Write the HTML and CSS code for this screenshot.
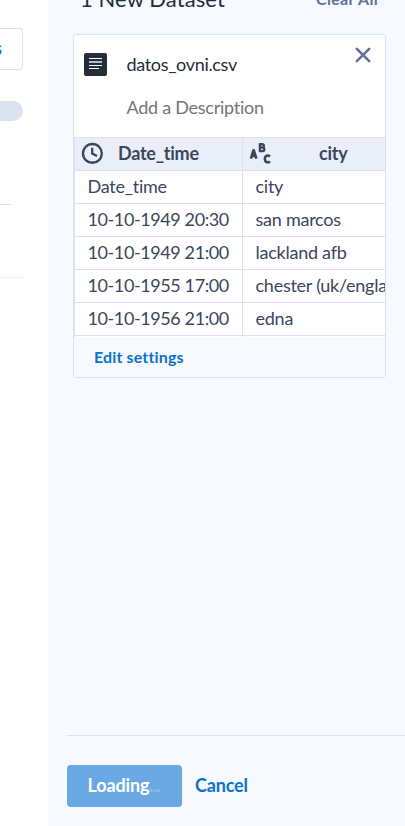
FILE: index.html
```
<!DOCTYPE html>
<html lang="en">
<head>
<meta charset="utf-8">
<title>Datasets</title>
<link rel="stylesheet" href="styles.css">
</head>
<body>
<div class="app">
  <aside class="side">
    <div class="side-button">s</div>
    <div class="side-pill"></div>
    <div class="side-line side-line-short"></div>
    <div class="side-line side-line-light"></div>
  </aside>
  <main class="panel">
    <header class="panel-head">
      <h1 class="title">1 New Dataset</h1>
      <span class="clear">Clear All</span>
    </header>
    <section class="card">
      <div class="card-head">
        <svg class="file-icon" width="23" height="23" viewBox="0 0 23 23"><rect width="23" height="23" rx="2" fill="#242d3a"/><path d="M5 5.5h13M5 12.5h13M5 15.5h10" stroke="#fff" stroke-width="1.1"/><path d="M5 9h13" stroke="#b8bdcb" stroke-width="2"/></svg>
        <div class="names">
          <div class="file-name">datos_ovni.csv</div>
          <div class="description">Add a Description</div>
        </div>
        <svg class="close" width="16" height="16" viewBox="0 0 16 16"><path d="M1.8 1.8l12.4 12.4M14.2 1.8L1.8 14.2" stroke="#627294" stroke-width="2.6" stroke-linecap="round"/></svg>
      </div>
      <div class="grid">
        <div class="cell th">
          <svg class="type-icon" width="22" height="22" viewBox="0 0 22 22" fill="none" stroke="#3a475a"><circle cx="10.4" cy="10.4" r="9.4" stroke-width="2.4"/><path d="M10.2 4.7v5.8l4.8 2.6" stroke-width="2.3"/></svg>
          <span class="th-label">Date_time</span>
        </div>
        <div class="cell th th-city">
          <svg class="type-icon" width="22" height="22" viewBox="0 0 22 22" fill="none" stroke="#3a475a" stroke-width="2.6" stroke-linejoin="round"><path d="M.9 15.6L3.4 7.4H3.8L6.4 15.6M2 13H5.4"/><path d="M9.9 1.2h2.3a1.7 1.7 0 0 1 0 3.4H9.9zM9.9 4.6h2.7a1.75 1.75 0 0 1 0 3.5H9.9z" stroke-width="2.4"/><path d="M20 13.4c-2.3-1.8-5.2-.7-5.2 2.5s2.9 4.3 5.2 2.5"/></svg>
          <span class="th-label">city</span>
        </div>
        <div class="cell">Date_time</div><div class="cell">city</div>
        <div class="cell date">10-10-1949 20:30</div><div class="cell">san marcos</div>
        <div class="cell date">10-10-1949 21:00</div><div class="cell">lackland afb</div>
        <div class="cell date">10-10-1955 17:00</div><div class="cell">chester (uk/england)</div>
        <div class="cell date">10-10-1956 21:00</div><div class="cell">edna</div>
        <div class="stub"></div><div class="stub"></div>
      </div>
      <div class="card-foot">Edit settings</div>
    </section>
    <footer class="actions">
      <button class="loading">Loading<span class="dots">...</span></button>
      <span class="cancel">Cancel</span>
    </footer>
  </main>
</div>
</body>
</html>
```
FILE: styles.css
```
* { box-sizing: border-box; }
body { margin: 0; font-family: Lato, "Liberation Sans", sans-serif; font-variant-ligatures: none; color: #3a475a; overflow: hidden; background: #fff; }
.app { display: flex; width: 405px; height: 826px; overflow: hidden; }
.side { width: 48px; flex: none; padding-top: 28px; }
.side-button { width: 23px; height: 42px; border: 1px solid #dae2f0; border-left: 0; border-radius: 0 4px 4px 0; color: #0b71cf; font-size: 18px; font-weight: 700; line-height: 39px; text-indent: -6px; overflow: hidden; }
.side-pill { width: 23px; height: 20px; margin-top: 31px; background: #dae2f0; border-radius: 0 10px 10px 0; }
.side-line { height: 1px; background: #dae2f0; }
.side-line-short { width: 11px; margin-top: 83px; }
.side-line-light { width: 23px; margin-top: 72px; background: #eaeef8; }
.panel { width: 357px; flex: none; background: #f6faff; display: flex; flex-direction: column; }
.panel-head { height: 34px; flex: none; display: flex; justify-content: space-between; padding: 0 27px 0 32px; white-space: nowrap; }
.title { margin: -16px 0 0; font-size: 22px; font-weight: 400; line-height: 30px; letter-spacing: .08px; color: #242d3a; }
.clear { margin-top: -11px; font-size: 16px; font-weight: 700; line-height: 20px; letter-spacing: .3px; color: #627294; }
.card { margin-left: 25px; width: 313px; height: 344px; flex: none; border: 1px solid #dae2f0; border-radius: 3px; overflow: hidden; background: #fff; }
.card-head { height: 102px; display: flex; }
.file-icon { margin: 18px 0 0 10px; flex: none; }
.names { margin: 16px 0 0 19.5px; flex: 1; font-size: 18px; letter-spacing: -.33px; }
.file-name { line-height: 26px; color: #242d3a; }
.description { margin-top: 17px; line-height: 26px; letter-spacing: -.26px; color: #757575; }
.close { margin: 12px 14px 0 0; flex: none; }
.grid { display: grid; grid-template-columns: 168px 220px; border-top: 1px solid #dae2f0; border-left: 1px solid #dae2f0; width: 388px; }
.cell { height: 33px; border-right: 1px solid #dae2f0; border-bottom: 1px solid #dae2f0; padding-left: 12.5px; font-size: 18px; line-height: 30px; letter-spacing: -.25px; white-space: nowrap; }
.date { letter-spacing: -.4px; }
.th { display: flex; align-items: center; padding-left: 7px; background: #eaeef8; font-weight: 700; }
.th-label { margin-left: 14px; padding-bottom: 2px; }
.th-city .th-label { margin-left: 47px; }
.type-icon { flex: none; overflow: visible; }
.stub { height: 1px; border-right: 1px solid #dae2f0; }
.card-foot { height: 41px; padding-left: 20px; background: #f6faff; color: #0b71cf; font-size: 16px; font-weight: 700; line-height: 39px; letter-spacing: .14px; }
.actions { margin: auto 0 0 19px; height: 91px; flex: none; border-top: 1px solid #dae2f0; padding-top: 29px; display: flex; font-size: 18px; font-weight: 700; line-height: 40px; letter-spacing: -.15px; }
.loading { width: 115px; height: 42px; border: 0; border-radius: 4px; padding: 0 0 2px 20.5px; background: #6aa8e4; color: #fff; font: inherit; letter-spacing: inherit; text-align: left; }
.dots { color: #8dbceb; letter-spacing: -.6px; }
.cancel { margin-left: 13px; color: #0b71cf; }
```
